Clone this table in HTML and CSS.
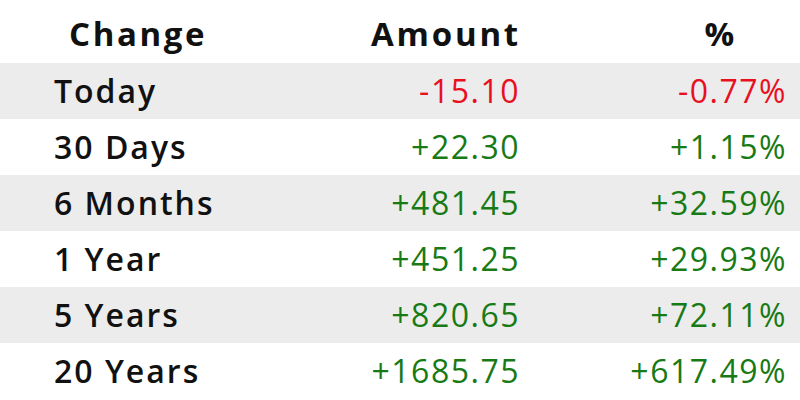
FILE: index.html
```html
<!DOCTYPE html>
<html>
<head>
<meta charset="utf-8">
<link rel="stylesheet" href="styles.css">
</head>
<body>
<div class="table">
  <div class="row head">
    <div class="c1">Change</div>
    <div class="c2">Amount</div>
    <div class="c3">%</div>
  </div>
  <div class="row alt">
    <div class="c1">Today</div>
    <div class="c2 neg">-15.10</div>
    <div class="c3 neg">-0.77%</div>
  </div>
  <div class="row">
    <div class="c1">30 Days</div>
    <div class="c2 pos">+22.30</div>
    <div class="c3 pos">+1.15%</div>
  </div>
  <div class="row alt">
    <div class="c1">6 Months</div>
    <div class="c2 pos">+481.45</div>
    <div class="c3 pos">+32.59%</div>
  </div>
  <div class="row">
    <div class="c1">1 Year</div>
    <div class="c2 pos">+451.25</div>
    <div class="c3 pos">+29.93%</div>
  </div>
  <div class="row alt">
    <div class="c1">5 Years</div>
    <div class="c2 pos">+820.65</div>
    <div class="c3 pos">+72.11%</div>
  </div>
  <div class="row">
    <div class="c1">20 Years</div>
    <div class="c2 pos">+1685.75</div>
    <div class="c3 pos">+617.49%</div>
  </div>
</div>
</body>
</html>
```

FILE: styles.css
```css
html, body {
  margin: 0;
  padding: 0;
  background: #ffffff;
}
body {
  font-family: "Open Sans", "Noto Sans", sans-serif;
  color: #111111;
  width: 800px;
  height: 400px;
  overflow: hidden;
}
.table {
  display: flex;
  flex-direction: column;
}
.row {
  display: grid;
  grid-template-columns: 280px 240px 267px;
  align-items: center;
  height: 56px;
  font-size: 32px;
  letter-spacing: 1.5px;
  line-height: 1;
}
.row.head {
  height: 63px;
  font-weight: 700;
  font-size: 33px;
  letter-spacing: 2.8px;
  padding-top: 4px;
  box-sizing: border-box;
}
.row.alt {
  background: #ececec;
}
.c1 {
  padding-left: 54px;
  font-weight: 600;
  letter-spacing: 2px;
}
.head .c1 {
  padding-left: 69px;
  font-weight: 700;
  letter-spacing: 2.6px;
}
.c2 {
  text-align: right;
}
.c3 {
  text-align: right;
}
.head .c2 {
  margin-right: -1px;
}
.head .c3 {
  padding-right: 50px;
}
.neg {
  color: #e8101e;
}
.pos {
  color: #187a14;
}
```
